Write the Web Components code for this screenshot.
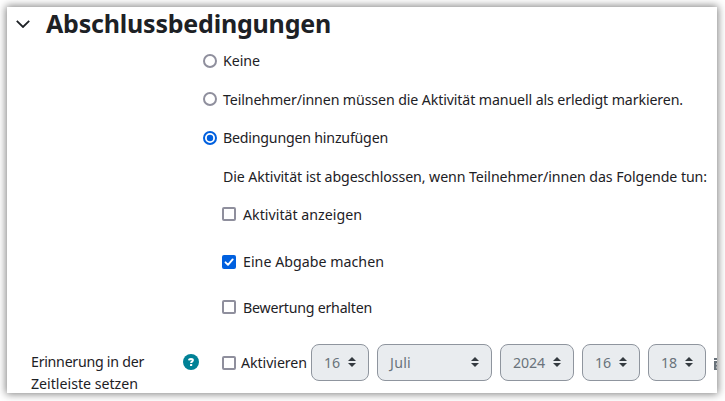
<!DOCTYPE html>
<html lang="de">
<head>
<meta charset="utf-8">
<title>Abschlussbedingungen</title>
<style>
  html, body {
    margin: 0;
    height: 401px;
    overflow: hidden;
    background: #fff;
  }
  body {
    display: flow-root;
    font: 14.2px/22px "Noto Sans", "Open Sans", sans-serif;
    color: #1d2125;
  }
</style>
</head>
<body>

<completion-panel heading="Abschlussbedingungen">
  <form-option type="radio" style="--w: 37px">Keine</form-option>
  <form-option type="radio" style="--gap: 17px; --w: 460px; --lift: 2px">Teilnehmer/innen müssen die Aktivität manuell als erledigt markieren.</form-option>
  <form-option type="radio" checked style="--gap: 16px; --w: 165px">Bedingungen hinzufügen</form-option>
  <form-option type="text" style="--gap: 17px; --w: 484px">Die Aktivität ist abgeschlossen, wenn Teilnehmer/innen das Folgende tun:</form-option>
  <form-option type="checkbox" style="--gap: 16px; --w: 119px; --lift: 2px">Aktivität anzeigen</form-option>
  <form-option type="checkbox" checked style="--gap: 25px; --w: 141px">Eine Abgabe machen</form-option>
  <form-option type="checkbox" style="--gap: 24px; --w: 129px; --lift: 2px">Bewertung erhalten</form-option>

  <reminder-row slot="footer">
    <fit-text slot="label" style="--w: 113px">Erinnerung in der</fit-text>
    <fit-text slot="label" style="--w: 107px">Zeitleiste setzen</fit-text>
    <form-option type="checkbox" inline style="--w: 66px">Aktivieren</form-option>
    <date-select style="--width: 58px; --w: 16px">16</date-select>
    <date-select style="--width: 115px; --w: 21px">Juli</date-select>
    <date-select style="--width: 74px; --w: 32px">2024</date-select>
    <date-select style="--width: 58px; --w: 16px">16</date-select>
    <date-select style="--width: 58px; --w: 16px">18</date-select>
    <calendar-icon></calendar-icon>
  </reminder-row>
</completion-panel>

<script>
(function () {

  // ===== TEXT SET TO A GIVEN WIDTH (--w) =====
  class FitText extends HTMLElement {
    constructor() {
      super();
      this.attachShadow({ mode: "open" }).innerHTML = `
        <style>
          :host { display: block; white-space: nowrap; width: max-content; }
        </style>
        <slot></slot>
      `;
    }

    connectedCallback() {
      const target = parseFloat(getComputedStyle(this).getPropertyValue("--w"));
      if (!target) return;
      const width = this.getBoundingClientRect().width;
      const slot = this.querySelector("slot");
      const text = slot ? slot.assignedNodes().map(n => n.textContent).join("") : this.textContent;
      this.style.letterSpacing = (target - width) / text.trim().length + "px";
    }
  }

  // ===== RADIO / CHECKBOX / PLAIN LINE =====
  class FormOption extends HTMLElement {
    constructor() {
      super();
      this.attachShadow({ mode: "open" });
    }

    connectedCallback() {
      this.shadowRoot.innerHTML = `
        <style>
          :host {
            display: flex;
            align-items: center;
            height: 22px;
            margin-top: var(--gap, 0);
            padding-left: 20px;
          }
          :host([type="radio"]) { padding-left: 0; }
          :host([type="checkbox"]) { padding-left: 19px; }
          :host([inline]) { padding-left: 0; }
          svg { width: 14px; height: 14px; flex: none; margin-right: 6px; margin-bottom: var(--lift, 0); }
          :host([type="checkbox"]) svg { margin-right: 7px; }
          :host([inline]) svg { margin-right: 5px; }
        </style>
        ${this.createControl()}
        <fit-text><slot></slot></fit-text>
      `;
    }

    createControl() {
      const checked = this.hasAttribute("checked");
      switch (this.getAttribute("type")) {
        case "radio":
          return checked
            ? `<svg viewBox="0 0 14 14"><circle cx="7" cy="7" r="6" fill="#fff" stroke="#0060df" stroke-width="2"/><circle cx="7" cy="7" r="3.2" fill="#0060df"/></svg>`
            : `<svg viewBox="0 0 14 14"><circle cx="7" cy="7" r="6" fill="#fff" stroke="#8f8f9d" stroke-width="2"/></svg>`;
        case "checkbox":
          return checked
            ? `<svg viewBox="0 0 14 14"><rect width="14" height="14" rx="2" fill="#0060df"/><path d="M3.5 7.3 6 9.8l4.7-5.4" fill="none" stroke="#fff" stroke-width="1.9" stroke-linecap="round" stroke-linejoin="round"/></svg>`
            : `<svg viewBox="0 0 14 14"><rect x="1" y="1" width="12" height="12" rx="1" fill="#fff" stroke="#8f8f9d" stroke-width="2"/></svg>`;
        default:
          return "";
      }
    }
  }

  // ===== DISABLED SELECT =====
  class DateSelect extends HTMLElement {
    constructor() {
      super();
      this.attachShadow({ mode: "open" });
    }

    connectedCallback() {
      this.shadowRoot.innerHTML = `
        <style>
          :host {
            display: flex;
            align-items: center;
            justify-content: space-between;
            box-sizing: border-box;
            flex: none;
            width: var(--width);
            height: 37px;
            padding: 0 12px;
            border: 1px solid #8f959e;
            border-radius: 8px;
            background: #e9ecef;
            color: #6a737b;
          }
          svg { width: 8px; height: 10px; margin-bottom: 1px; }
        </style>
        <fit-text><slot></slot></fit-text>
        <svg viewBox="0 0 8 10"><path d="M4 0 0 4h8zM4 10 0 6h8z" fill="#343a40"/></svg>
      `;
    }
  }

  // ===== CALENDAR BUTTON =====
  class CalendarIcon extends HTMLElement {
    constructor() {
      super();
      this.attachShadow({ mode: "open" }).innerHTML = `
        <style>
          :host { display: block; flex: none; width: 14px; height: 14px; }
          svg { display: block; }
        </style>
        <svg width="14" height="14" viewBox="0 0 14 14" fill="#6a737b">
          <path d="M3 0h2v2h4V0h2v2h3v2H0V2h3z"/>
          <path d="M0 5h14v9H0z"/>
          <path d="M2.5 7h2v2h-2zM6 7h2v2H6zM9.500 7h2v2h-2zM2.500 10.500h2v2h-2zM6 10.500h2v2H6z" fill="#fff"/>
        </svg>
      `;
    }
  }

  // ===== LABEL, HELP AND DATE FIELDS =====
  class ReminderRow extends HTMLElement {
    constructor() {
      super();
      this.attachShadow({ mode: "open" }).innerHTML = `
        <style>
          :host {
            display: grid;
            grid-template-columns: 152px 39px max-content;
            align-items: start;
            padding-left: 24px;
          }
          .label { padding-top: 7px; }
          .help { padding-top: 10px; }
          .help svg { display: block; }
          .fields { display: flex; align-items: center; gap: 8px; }
          ::slotted(form-option) { margin-right: -4px; }
        </style>
        <div class="label"><slot name="label"></slot></div>
        <div class="help">
          <svg width="16" height="16" viewBox="0 0 16 16">
            <circle cx="8" cy="8" r="8" fill="#008196"/>
            <path d="M6 6.300C6.100 5.200 6.900 4.900 8 4.900c1.200 0 1.900.5 1.900 1.400 0 1.300-1.800 1.300-1.800 2.600" fill="none" stroke="#fff" stroke-width="2"/>
            <rect x="7" y="10" width="2.200" height="2.100" rx=".6" fill="#fff"/>
          </svg>
        </div>
        <div class="fields"><slot></slot></div>
      `;
    }
  }

  // ===== COLLAPSIBLE SECTION =====
  class CompletionPanel extends HTMLElement {
    constructor() {
      super();
      this.attachShadow({ mode: "open" });
    }

    connectedCallback() {
      this.shadowRoot.innerHTML = `
        <style>
          :host {
            display: block;
            box-sizing: border-box;
            width: 710px;
            height: 386px;
            margin: 7px 0 0 7px;
            background: #fff;
            box-shadow: 0 0 8px 1px rgba(0, 0, 0, .5);
          }
          .clip { height: 386px; overflow: hidden; }
          header {
            display: flex;
            align-items: center;
            height: 34px;
            padding-left: 9px;
          }
          header svg { margin-right: 16px; }
          h3 {
            margin: 0 0 2px;
            font-size: 25px;
            line-height: 32px;
            font-weight: 700;
          }
          .options { padding: 9px 0 0 196px; }
          .footer { margin-top: 25px; }
        </style>
        <div class="clip">
          <header>
            <svg width="14" height="8" viewBox="0 0 14 8"><path d="M.8.8 7 7 13.2.8" fill="none" stroke="#1d2125" stroke-width="1.8"/></svg>
            <h3><fit-text style="--w: 285px">${this.getAttribute("heading")}</fit-text></h3>
          </header>
          <div class="options"><slot></slot></div>
          <div class="footer"><slot name="footer"></slot></div>
        </div>
      `;
    }
  }

  customElements.define("calendar-icon", CalendarIcon);
  customElements.define("date-select", DateSelect);
  customElements.define("form-option", FormOption);
  customElements.define("reminder-row", ReminderRow);
  customElements.define("completion-panel", CompletionPanel);
  // last, so that every line already has its final styles when it is measured
  customElements.define("fit-text", FitText);

})();
</script>
</body>
</html>
